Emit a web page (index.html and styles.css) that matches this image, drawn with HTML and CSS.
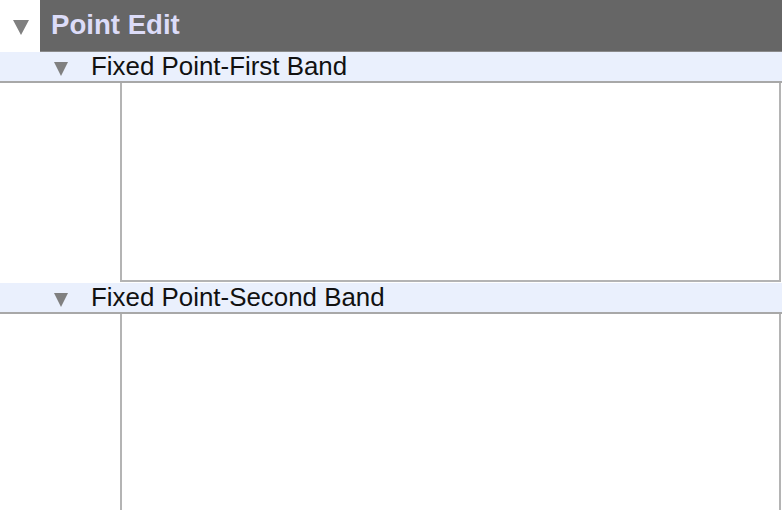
FILE: index.html
```html
<!DOCTYPE html>
<html>
<head>
<meta charset="utf-8">
<link rel="stylesheet" href="styles.css">
</head>
<body>
<div class="panel">
  <div class="header">
    <div class="toggle"><span class="tri tri-big"></span></div>
    <div class="title">Point Edit</div>
  </div>
  <div class="section">
    <div class="band">
      <span class="tri tri-small"></span>
      <span class="band-label">Fixed Point-First Band</span>
    </div>
    <div class="box-row"><div class="box box-first"></div></div>
  </div>
  <div class="section">
    <div class="band">
      <span class="tri tri-small"></span>
      <span class="band-label">Fixed Point-Second Band</span>
    </div>
    <div class="box-row"><div class="box box-second"></div></div>
  </div>
</div>
</body>
</html>
```
FILE: styles.css
```css
html, body {
  margin: 0;
  padding: 0;
  background: #ffffff;
  font-family: "Liberation Sans", Arial, sans-serif;
  overflow: hidden;
}
.panel {
  width: 782px;
  height: 510px;
  overflow: hidden;
}
.header {
  display: flex;
  height: 52px;
}
.toggle {
  width: 40px;
  display: flex;
  align-items: center;
  justify-content: center;
  background: #ffffff;
}
.title {
  flex: 1;
  background: #666666;
  color: #dcdcf8;
  font-weight: bold;
  font-size: 27.6px;
  display: flex;
  align-items: center;
  padding-left: 11px;
  padding-bottom: 2px;
  border-bottom: 1px solid #8a8a8a;
}
.tri {
  display: inline-block;
  width: 0;
  height: 0;
  border-left: 8px solid transparent;
  border-right: 8px solid transparent;
  border-top: 15px solid #808080;
}
.tri-big {
  margin-top: 3px;
  margin-left: 2px;
}
.tri-small {
  border-left-width: 7px;
  border-right-width: 7px;
  border-top-width: 14px;
  margin-left: 54px;
  margin-right: 23px;
  margin-top: 4px;
}
.band {
  display: flex;
  align-items: center;
  height: 29px;
  background: #eaf0fd;
  border-bottom: 2px solid #a8a8a8;
}
.band-label {
  font-size: 25.9px;
  color: #111111;
}
.box-row {
  padding-left: 120px;
  padding-right: 1px;
}
.box {
  background: #ffffff;
  border-left: 2px solid #b4b4b4;
  border-right: 2px solid #b4b4b4;
  border-bottom: 2px solid #b4b4b4;
}
.box-first {
  height: 197px;
  margin-bottom: 1px;
}
.box-second {
  height: 220px;
}
```
